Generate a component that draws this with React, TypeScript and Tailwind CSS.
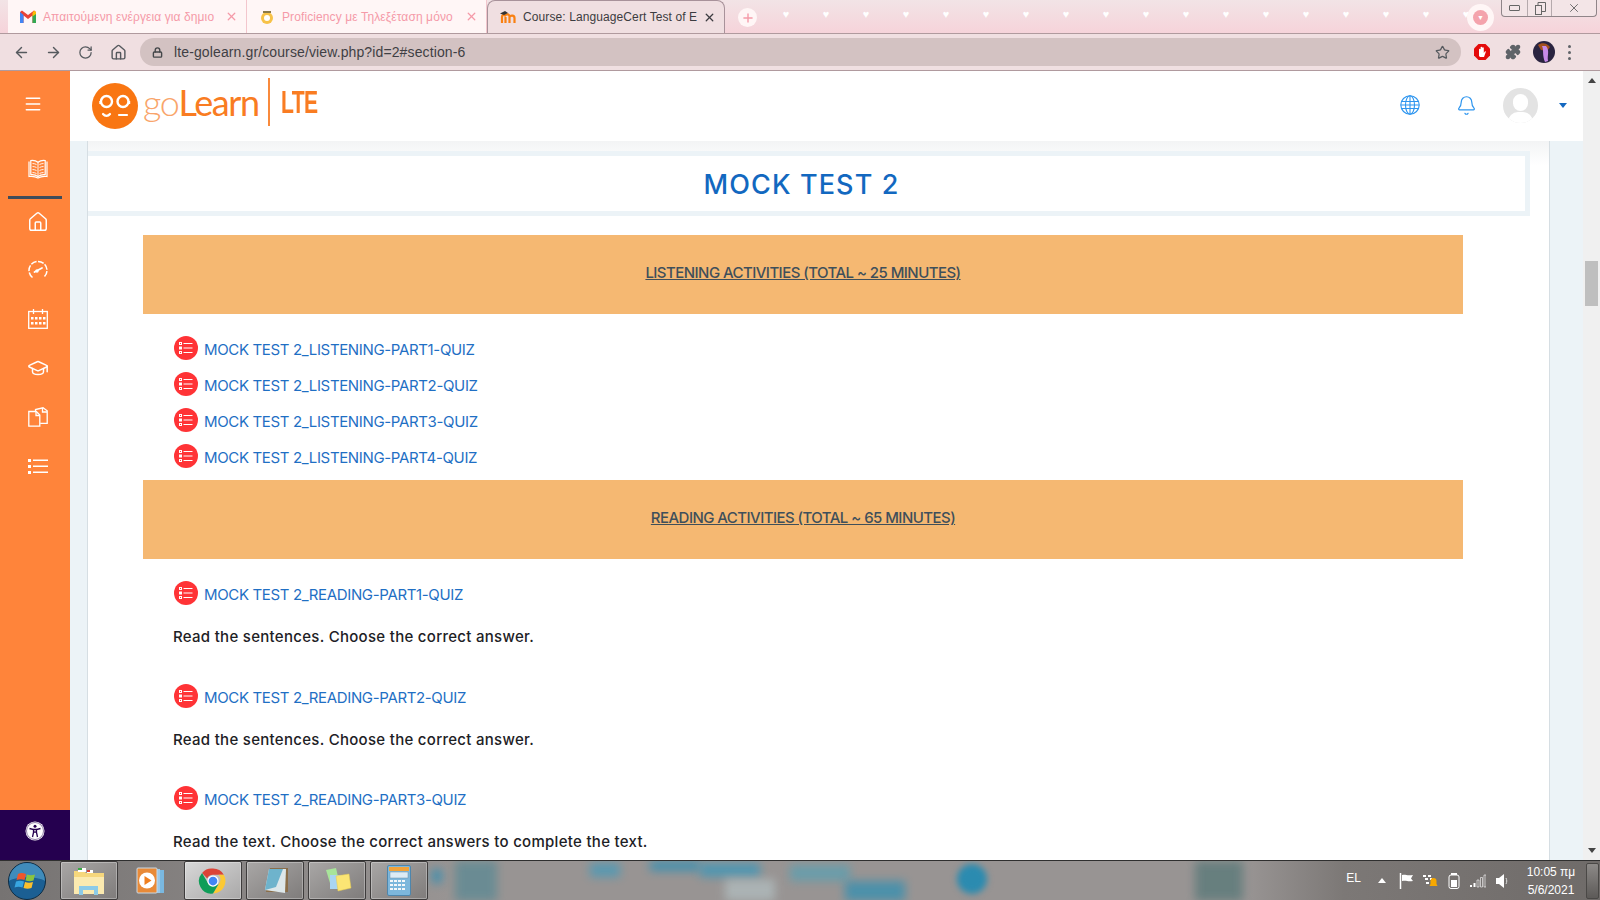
import { ArrowLeft, ArrowRight, RotateCw, Home, Lock, Star, Puzzle, Bell, Menu, GraduationCap, X, Plus } from 'lucide-react';

const poppins = "font-['Inter','Noto_Sans',sans-serif]";

function QuizIcon() {
  return (
    <svg width="24" height="24" viewBox="0 0 24 24" className="shrink-0">
      <circle cx="12" cy="12" r="12" fill="#ff3336" />
      <g fill="none" stroke="#fff" strokeWidth="1">
        <rect x="5.500" y="6.500" width="2" height="2" />
        <rect x="5.500" y="11" width="2" height="2" />
        <rect x="5.500" y="15.500" width="2" height="2" />
      </g>
      <path d="M9.500 7.500h9M9.500 12h9M9.500 16.500h9" stroke="#fff" strokeWidth="1" />
    </svg>
  );
}

function QuizLink({ label }: { label: string }) {
  return (
    <div className="flex items-start gap-[6px]">
      <QuizIcon />
      <a href="#" className="pt-[4px] text-[15px] leading-[20px] text-[#1f6fc4] tracking-[-0.35px] whitespace-nowrap">{label}</a>
    </div>
  );
}

function Banner({ label, h }: { label: string; h: string }) {
  return (
    <div className={`${h} bg-[#f5b872] flex items-center justify-center pb-[2px]`}>
      <span className="text-[15px] font-medium text-[#3f4f5a] underline tracking-[-0.55px]">{label}</span>
    </div>
  );
}

function Desc({ text }: { text: string }) {
  return <p className="ml-[-1px] text-[15px] leading-[20px] font-medium text-[#1d2125] tracking-[0.29px] whitespace-nowrap">{text}</p>;
}

function Tab({ title, active, width, icon }: { title: string; active?: boolean; width: string; icon: React.ReactNode }) {
  return (
    <div className={`${width} h-[33px] flex items-center pl-[12px] pr-[8px] gap-[7px] ${active ? 'bg-[#f0dfe1] border border-b-0 border-[#a8929a] rounded-t-[8px]' : 'bg-[#fff6f6] border-r border-[#f3c6cd]'}`}>
      <span className="w-[16px] h-[16px] flex items-center justify-center shrink-0">{icon}</span>
      <span className={`flex-1 min-w-0 whitespace-nowrap text-[12px] tracking-[0.1px] font-['Liberation_Sans',sans-serif] ${active ? 'text-[#3c3c40]' : 'text-[#f59aa8]'}`}>{title}</span>
      <X size={13} strokeWidth={2.4} className={active ? 'text-[#3c3c40]' : 'text-[#f59aa8]'} />
    </div>
  );
}

function TabStrip() {
  const hearts = Array.from({ length: 18 });
  return (
    <div className="relative h-[34px] flex items-start pl-[8px] bg-gradient-to-b from-[#f2e4e6] to-[#f6d3da] border-b border-[#b09a9e]">
      <Tab
        width="w-[239px]"
        title="Απαιτούμενη ενέργεια για δημιο"
        icon={
          <svg width="16" height="13" viewBox="0 0 16 13">
            <path d="M0 2v11h3.500V5.500L8 9l4.500-3.500V13H16V2l-2-1.600L8 5 2 .4z" fill="#ea4335" />
            <path d="M0 2v11h3.500V5z" fill="#4285f4" />
            <path d="M16 2v11h-3.500V5z" fill="#34a853" />
            <path d="M14 .4 16 2v2l-3.500 2.500V3z" fill="#fbbc04" />
          </svg>
        }
      />
      <Tab
        width="w-[240px]"
        title="Proficiency με Τηλεξέταση μόνο"
        icon={
          <svg width="14" height="17" viewBox="0 0 14 17">
            <circle cx="7" cy="10" r="6" fill="#f7c248" />
            <circle cx="7" cy="10" r="3" fill="#fff" />
            <path d="M3 3h8v2H3z" fill="#8a7a4a" />
          </svg>
        }
      />
      <Tab
        active
        width="w-[238px]"
        title="Course: LanguageCert Test of E"
        icon={
          <svg width="16" height="14" viewBox="0 0 16 14">
            <path d="M2 13V7c0-2 2-2.500 3-1.500C6 4 9 4 9.500 6V13M5.500 13V7M9.500 7c1-2 5-2 5 1v5" fill="none" stroke="#f98012" strokeWidth="2.200" />
            <path d="M0 3.500 5 1l3 2-4 2z" fill="#333" />
          </svg>
        }
      />
      <span className="ml-[13px] mt-[8px] w-[19px] h-[19px] rounded-full bg-[#fff6f6] flex items-center justify-center">
        <Plus size={14} strokeWidth={2.4} className="text-[#f59aa8]" />
      </span>
      <div className="ml-[24px] mt-[5px] flex gap-[30px] text-[11px] leading-[18px] text-white">
        {hearts.map((_, i) => <span key={i} className="w-[10px] text-center">♥</span>)}
      </div>
      <span className="absolute left-[1467px] top-[4px] w-[27px] h-[27px] rounded-full bg-[#fff6f6] flex items-center justify-center">
        <span className="w-[15px] h-[15px] rounded-full bg-[#f4a3ac] flex items-center justify-center text-white text-[7px] leading-none">▼</span>
      </span>
      {/* window buttons */}
      <div className="absolute right-[3px] top-0 flex h-[17px] bg-[#f3e5e7] border border-t-0 border-[#8f8589] rounded-b-[4px] text-[#555]">
        <div className="w-[26px] flex items-center justify-center border-r border-[#b5aaad]"><span className="w-[11px] h-[6px] border border-[#666] rounded-[1px]" /></div>
        <div className="w-[24px] flex items-center justify-center border-r border-[#b5aaad]">
          <svg width="12" height="13" viewBox="0 0 12 13" fill="none" stroke="#666"><rect x="1.500" y="3.500" width="6" height="9" /><path d="M4 3V.5h7.500v9H8" /></svg>
        </div>
        <div className="w-[44px] flex items-center justify-center"><X size={14} strokeWidth={1.6} className="text-[#666]" /></div>
      </div>
    </div>
  );
}

function Toolbar() {
  return (
    <div className="h-[37px] flex items-center pl-[13px] bg-[#f0dfe1] border-b border-[#b09a9e] text-[#55595e]">
      <ArrowLeft size={17} strokeWidth={2} />
      <ArrowRight size={17} strokeWidth={2} className="ml-[15px]" />
      <RotateCw size={15} strokeWidth={2} className="ml-[16px]" />
      <Home size={17} strokeWidth={2} className="ml-[17px]" />
      <div className="ml-[13px] w-[1321px] h-[28px] rounded-full bg-[#d3c2c2] flex items-center pl-[12px] pr-[11px]">
        <Lock size={11} strokeWidth={3} className="text-[#44474a]" />
        <span className="ml-[11px] text-[14px] tracking-[0.12px] text-[#3f3f44] font-['Liberation_Sans',sans-serif]">lte-golearn.gr/course/view.php?id=2#section-6</span>
        <Star size={15} strokeWidth={2} className="ml-auto text-[#55595e]" />
      </div>
      {/* Opera stop badge */}
      <svg width="18" height="18" viewBox="0 0 18 18" className="ml-[12px]">
        <path d="M5.500 1h7L17 5.500v7L12.500 17h-7L1 12.500v-7z" fill="#e40b0b" />
        <path d="M6 13V6.500a.8.8 0 0 1 1.600 0V9V4.500a.8.8 0 0 1 1.600 0V9V5a.8.8 0 0 1 1.600 0v5l1-1.500c.6-.7 1.300 0 1 .5L11 14H7z" fill="#fff" />
      </svg>
      <Puzzle size={16} strokeWidth={2} fill="#5f6368" className="ml-[14px] text-[#5f6368]" />
      <svg width="22" height="22" viewBox="0 0 22 22" className="ml-[12px]">
        <circle cx="11" cy="11" r="11" fill="#2a2440" />
        <path d="M5 4c4-3 9-2 12 2l-3 4-6-1z" fill="#a3501e" />
        <path d="M9 5c2 4 0 9 3 16l3-1c-1-6 2-10-2-15z" fill="#c68ae8" />
      </svg>
      <span className="ml-[13px] flex flex-col gap-[3px]">
        <span className="w-[3px] h-[3px] rounded-full bg-[#5f6368]" />
        <span className="w-[3px] h-[3px] rounded-full bg-[#5f6368]" />
        <span className="w-[3px] h-[3px] rounded-full bg-[#5f6368]" />
      </span>
    </div>
  );
}

function BookIcon() {
  return (
    <svg width="20" height="20" viewBox="0 0 20 20" fill="none" stroke="#fff" strokeWidth="1.200">
      <path d="M1 2.500v15c3-.4 6.500 0 9 1.500 2.500-1.500 6-1.900 9-1.500v-15" />
      <path d="M2.800 1.500c3-.4 5.500.4 7.200 1.700 1.700-1.300 4.200-2.100 7.200-1.700v14.200c-3-.3-5.500.5-7.200 1.700-1.700-1.200-4.200-2-7.200-1.700z" />
      <path d="M10 3.200v14M4.500 4.500c1.500 0 2.800.4 4 1M4.500 7.500c1.500 0 2.800.4 4 1M4.500 10.500c1.500 0 2.800.4 4 1M4.500 13.500c1.500 0 2.800.4 4 1M15.500 4.500c-1.500 0-2.800.4-4 1M15.500 7.500c-1.500 0-2.800.4-4 1M15.500 10.500c-1.500 0-2.800.4-4 1M15.500 13.500c-1.500 0-2.800.4-4 1" strokeWidth=".9" />
    </svg>
  );
}

function GaugeIcon() {
  return (
    <svg width="20" height="20" viewBox="0 0 20 20" fill="none" stroke="#fff" strokeWidth="1.500">
      <path d="M4.500 17.500a9 9 0 1 1 11 0" strokeDasharray="6 1.400" />
      <path d="M6.500 12 14 8" strokeWidth="1.800" strokeLinecap="round" />
      <circle cx="9" cy="11" r="1" fill="#fff" />
    </svg>
  );
}

function CalendarIcon() {
  return (
    <svg width="20" height="20" viewBox="0 0 20 20" fill="none" stroke="#fff" strokeWidth="1.300">
      <rect x=".7" y="2.500" width="18.600" height="16.800" />
      <path d="M5.500 0v5M14.500 0v5" />
      <g fill="#fff" stroke="none">
        <rect x="3" y="8" width="2.500" height="2.500" /><rect x="7" y="8" width="2.500" height="2.500" /><rect x="11" y="8" width="2.500" height="2.500" /><rect x="15" y="8" width="2.500" height="2.500" />
        <rect x="3" y="13" width="2.500" height="2.500" /><rect x="7" y="13" width="2.500" height="2.500" /><rect x="11" y="13" width="2.500" height="2.500" /><rect x="15" y="13" width="2.500" height="2.500" />
      </g>
    </svg>
  );
}

function FilesIcon() {
  return (
    <svg width="20" height="20" viewBox="0 0 20 20" fill="none" stroke="#fff" strokeWidth="1.300">
      <path d="M.8 4.500h7.500l3.500 3.500v11.200H.8z" />
      <path d="M8 4.500v4h3.800" />
      <path d="M7.500 4V2.500L15 .8l4.200 3v12.500h-7" />
      <path d="M14.500 1v4h4.500" />
    </svg>
  );
}

function ListIcon() {
  return (
    <svg width="20" height="20" viewBox="0 0 20 20" fill="#fff">
      <rect x="0" y="3" width="3" height="3" /><rect x="0" y="9" width="3" height="3" /><rect x="0" y="15" width="3" height="3" />
      <rect x="5" y="3.500" width="15" height="1.500" /><rect x="5" y="9.500" width="15" height="1.500" /><rect x="5" y="15.500" width="15" height="1.500" />
    </svg>
  );
}

function GlobeIcon() {
  return (
    <svg width="20" height="20" viewBox="0 0 20 20" fill="none" stroke="#2f96ef" strokeWidth="1.100">
      <circle cx="10" cy="10" r="9.200" />
      <ellipse cx="10" cy="10" rx="4.500" ry="9.200" />
      <path d="M10 .8v18.400M1.500 6.500h17M.8 10h18.400M1.500 13.500h17" />
    </svg>
  );
}

function Sidebar() {
  const items = [<GaugeIcon key="g" />, <CalendarIcon key="c" />, <GraduationCap key="h" size={22} strokeWidth={1.6} className="-ml-[1px]" />, <FilesIcon key="f" />, <ListIcon key="l" />];
  return (
    <aside className="w-[70px] shrink-0 bg-[#ff843a] flex flex-col text-white">
      <div className="h-[70px] flex items-center pl-[23px] pb-[4px]"><Menu size={20} strokeWidth={1.8} /></div>
      <div className="h-[55px] flex items-center pl-[28px]"><BookIcon /></div>
      <div className="mx-[8px] h-[3px] bg-[#3f4c5a]" />
      <div className="h-[46px] flex items-center pl-[27px]"><Home size={22} strokeWidth={1.6} /></div>
      {items.map((icon, i) => (
        <div key={i} className="h-[49px] flex items-center pl-[28px]">{icon}</div>
      ))}
      <div className="mt-auto h-[50px] bg-[#25004f] flex items-center justify-center pb-[8px]">
        <svg width="20" height="20" viewBox="0 0 20 20">
          <circle cx="10" cy="10" r="9.500" fill="#fff" />
          <circle cx="10" cy="10" r="8.500" fill="none" stroke="#25004f" strokeWidth=".5" />
          <circle cx="10" cy="5.200" r="1.500" fill="#25004f" />
          <path d="M4.500 7.500 8.500 8.500v3L7.500 16M15.500 7.500l-4 1v3l1 4.500M8.500 8.500h3M8.500 11.500 10 11l1.500.5" fill="none" stroke="#25004f" strokeWidth="1.300" />
        </svg>
      </div>
    </aside>
  );
}

function Header() {
  return (
    <header className="h-[70px] bg-white flex items-center shrink-0">
      {/* logo */}
      <svg width="46" height="46" viewBox="0 0 46 46" className="ml-[22px] shrink-0 -mt-[1px]">
        <circle cx="23" cy="23" r="23" fill="#f97612" />
        <g fill="none" stroke="#fff" strokeWidth="2.400">
          <circle cx="14.500" cy="18.500" r="5.500" />
          <circle cx="31" cy="18.500" r="5.500" />
          <path d="M8.500 18v3M37 18v3" />
        </g>
        <path d="M11 31c2 2.500 5 2.500 7 0" fill="none" stroke="#fff" strokeWidth="2.200" strokeLinecap="round" />
        <path d="M27 32h8" stroke="#fff" strokeWidth="2.200" strokeLinecap="round" />
      </svg>
      <div className="ml-[5px] flex items-baseline text-[36px] leading-none tracking-[-1.4px] font-['Lato',sans-serif] text-[#f97c22] -mt-[9px]">
        <span className="font-light text-[#f9a56b]">go</span>
        <span className="font-normal">Learn</span>
      </div>
      <div className="ml-[9px] w-[2px] h-[48px] bg-[#f98a3c] mb-[9px]" />
      <span className="ml-[11px] text-[32px] leading-none font-bold text-[#f97c22] font-['Liberation_Sans',sans-serif] tracking-[-1px] scale-x-[0.66] origin-left -mt-[8px]">LTE</span>
      <div className="ml-auto flex items-center text-[#2f96ef] pb-[2px]">
        <GlobeIcon />
        <Bell size={21} strokeWidth={1.4} className="ml-[36px]" />
        <span className="relative ml-[26px] w-[35px] h-[35px] rounded-full bg-[#e3e3e3] overflow-hidden">
          <span className="absolute left-[10px] top-[6px] w-[15px] h-[17px] rounded-full bg-white" />
          <span className="absolute left-[5px] top-[24px] w-[25px] h-[20px] rounded-full bg-white" />
        </span>
        <span className="ml-[21px] mr-[16px] w-0 h-0 border-x-[4px] border-x-transparent border-t-[5px] border-t-[#1468c0]" />
      </div>
    </header>
  );
}

function Scrollbar() {
  return (
    <div className="w-[17px] shrink-0 bg-[#f0f0f0] flex flex-col items-center">
      <span className="mt-[7px] w-0 h-0 border-x-[4px] border-x-transparent border-b-[5px] border-b-[#444]" />
      <span className="mt-[178px] w-[13px] h-[45px] bg-[#bfbfbf]" />
      <span className="mt-auto mb-[7px] w-0 h-0 border-x-[4px] border-x-transparent border-t-[5px] border-t-[#444]" />
    </div>
  );
}

function Course() {
  return (
    <div className={`flex-1 min-h-0 bg-[#ecf3f7] pl-[17px] pr-[33px] overflow-hidden ${poppins}`}>
      <div className="h-full bg-white border-x border-[#d6dee3] bg-gradient-to-b from-[#f3f4f5] to-white to-[24px] pt-[10px] pr-[19px]">
        <div className="h-[65px] bg-white border-[5px] border-l-0 border-[#ecf3f7] flex items-center justify-center pr-[10px] pt-[3px]">
          <h1 className="text-[27px] font-medium text-[#1268c0] tracking-[1.1px]">MOCK TEST 2</h1>
        </div>
        <div className="mt-[19px] ml-[55px] mr-[67px]">
          <Banner h="h-[79px]" label="LISTENING ACTIVITIES (TOTAL ~ 25 MINUTES)" />
          <div className="ml-[31px] mt-[22px] flex flex-col gap-[12px]">
            <QuizLink label="MOCK TEST 2_LISTENING-PART1-QUIZ" />
            <QuizLink label="MOCK TEST 2_LISTENING-PART2-QUIZ" />
            <QuizLink label="MOCK TEST 2_LISTENING-PART3-QUIZ" />
            <QuizLink label="MOCK TEST 2_LISTENING-PART4-QUIZ" />
          </div>
          <div className="mt-[12px]">
            <Banner h="h-[79px]" label="READING ACTIVITIES (TOTAL ~ 65 MINUTES)" />
          </div>
          <div className="ml-[31px] mt-[22px]">
            <QuizLink label="MOCK TEST 2_READING-PART1-QUIZ" />
            <div className="mt-[22px]"><Desc text="Read the sentences. Choose the correct answer." /></div>
            <div className="mt-[37px]"><QuizLink label="MOCK TEST 2_READING-PART2-QUIZ" /></div>
            <div className="mt-[22px]"><Desc text="Read the sentences. Choose the correct answer." /></div>
            <div className="mt-[36px]"><QuizLink label="MOCK TEST 2_READING-PART3-QUIZ" /></div>
            <div className="mt-[22px]"><Desc text="Read the text. Choose the correct answers to complete the text." /></div>
          </div>
        </div>
      </div>
    </div>
  );
}

function TaskButton({ children, light, bare }: { children: React.ReactNode; light?: boolean; bare?: boolean }) {
  return (
    <div className={`w-[58px] h-[39px] flex items-center justify-center rounded-[2px] ${bare ? '' : 'border border-[#3e3c3c] shadow-[inset_0_0_0_1px_rgba(255,255,255,0.3)]'} ${light ? 'bg-gradient-to-br from-[#d8d8d8] to-[#a9a8a8]' : bare ? '' : 'bg-gradient-to-br from-[#a9a7a6] to-[#7f7c7b]'}`}>
      {children}
    </div>
  );
}

function Taskbar() {
  const blobs = [
    'left-[432px] top-[8px] w-[10px] h-[14px] bg-[#2f8fb5]',
    'left-[455px] top-0 w-[42px] h-[40px] bg-[#5f8a94]',
    'left-[590px] top-[2px] w-[30px] h-[14px] bg-[#4a9ab8]',
    'left-[650px] top-0 w-[50px] h-[10px] bg-[#2f8fb5]',
    'left-[700px] top-[2px] w-[60px] h-[14px] bg-[#3f97b8]',
    'left-[725px] top-[18px] w-[50px] h-[22px] bg-[#b0bbbd]',
    'left-[790px] top-[4px] w-[60px] h-[16px] bg-[#5f9fb0]',
    'left-[845px] top-[20px] w-[60px] h-[20px] bg-[#3990b0]',
    'left-[1195px] top-0 w-[48px] h-[40px] bg-[#5c7a7a]',
  ];
  return (
    <div className="relative h-[40px] shrink-0 overflow-hidden bg-[linear-gradient(90deg,#767372_0%,#989493_28%,#989493_78%,#7c7876_84%,#6f6b69_100%)] border-t border-[#2f2f2f] flex items-center">
      {/* blurred wallpaper showing through */}
      {blobs.map((b) => <span key={b} className={`absolute ${b} blur-[5px] opacity-80`} />)}
      <span className="absolute left-[957px] top-[3px] w-[30px] h-[30px] rounded-full bg-[#2b8bb0] blur-[3px]" />

      <div className="relative flex items-center w-[60px] pl-[8px]">
        <svg width="38" height="38" viewBox="0 0 38 38">
          <circle cx="19" cy="19" r="18.500" fill="#1b5f93" stroke="#0d2c44" />
          <path d="M1 19a18 18 0 0 1 36 0c-8-5-28-5-36 0z" fill="#5eb1dd" opacity=".55" />
          <path d="M10 12c3-1.500 5-1 8 0l-1.500 6c-3-1-5-1-8 0z" fill="#f0562a" />
          <path d="M19 12.500c3 1 5 1 8 0L25.500 18.500c-3 1-5 1-8 0z" fill="#8ac43f" />
          <path d="M8 19.500c3-1 5-1 8 0L14.500 25.500c-3-1-5-1-8 0z" fill="#38a5e0" />
          <path d="M17 20c3 1 5 1 8 0L23.500 26c-3 1-5 1-8 0z" fill="#fbc02d" />
        </svg>
      </div>
      <div className="relative flex items-center">
        <TaskButton>
          <svg width="32" height="30" viewBox="0 0 32 30">
            <path d="M1 5h10l2 2h18v20H1z" fill="#f6d77c" />
            <path d="M1 11h30v17H1z" fill="#fbeab0" />
            <path d="M5 2h8v4H5z" fill="#fff" /><path d="M5 2h4v2H5z" fill="#39a845" />
            <path d="M14 4h6v3h-6z" fill="#fff" /><path d="M14 4h3v2h-3z" fill="#d6402f" />
            <path d="M6 20h19v9h-4v-5h-11v5H6z" fill="#8ccbe8" />
          </svg>
        </TaskButton>
        <div className="ml-[3px]">
          <TaskButton bare>
            <svg width="30" height="28" viewBox="0 0 30 28">
              <rect x="9" y="3" width="20" height="23" fill="#7ab8e0" />
              <rect x="5" y="2" width="20" height="24" fill="#9bc9ea" />
              <rect x="2" y="1" width="20" height="25" rx="1" fill="#e88a38" stroke="#c9d9e6" />
              <circle cx="12" cy="13.500" r="8" fill="#fff" />
              <path d="M9.500 9v9l7-4.500z" fill="#f08020" />
            </svg>
          </TaskButton>
        </div>
        <div className="ml-[5px]">
          <TaskButton light>
            <svg width="30" height="30" viewBox="0 0 48 48">
              <path d="M24 4a20 20 0 0 1 17.300 10H24a10 10 0 0 0-9.200 6L6.500 11A20 20 0 0 1 24 4z" fill="#db4437" />
              <path d="M41.300 14A20 20 0 0 1 24 44l8.700-15a10 10 0 0 0 0-15z" fill="#fcc934" />
              <path d="M24 44A20 20 0 0 1 6.500 11l8.600 15a10 10 0 0 0 9 6.500l8.600-3.500z" fill="#0f9d58" />
              <circle cx="24" cy="24" r="9" fill="#fff" />
              <circle cx="24" cy="24" r="7" fill="#4285f4" />
            </svg>
          </TaskButton>
        </div>
        <div className="ml-[4px]">
          <TaskButton>
            <svg width="30" height="30" viewBox="0 0 30 30">
              <path d="M10 2h18v24H6z" fill="#8a6e4a" />
              <path d="M9 3h17l-1 24-20-3z" fill="#dde7ea" />
              <path d="M9 3h14L16 21l-11 3z" fill="#6eb3cc" />
            </svg>
          </TaskButton>
        </div>
        <div className="ml-[4px]">
          <TaskButton>
            <svg width="32" height="30" viewBox="0 0 32 30">
              <path d="M5 4 15 2l3 13-9 2z" fill="#a8e49a" />
              <path d="M9 9h12v14H9z" fill="#a9d5f2" />
              <path d="M15 10l13-2 2 14-13 3z" fill="#fbe574" stroke="#e5ca50" strokeWidth=".5" />
            </svg>
          </TaskButton>
        </div>
        <div className="ml-[4px]">
          <TaskButton>
            <svg width="24" height="31" viewBox="0 0 24 31">
              <rect x=".5" y=".5" width="23" height="30" rx="1.500" fill="#7db7dc" stroke="#4d86ad" />
              <rect x="2" y="2" width="20" height="4" fill="#f0a23a" />
              <rect x="3" y="7" width="18" height="6" fill="#dcebf5" stroke="#6d8ea8" strokeWidth=".5" />
              <g fill="#f4f7f9">
                <rect x="3" y="15" width="3" height="2" /><rect x="7" y="15" width="3" height="2" /><rect x="11" y="15" width="3" height="2" /><rect x="15" y="15" width="3" height="2" />
                <rect x="3" y="19" width="3" height="2" /><rect x="7" y="19" width="3" height="2" /><rect x="11" y="19" width="3" height="2" /><rect x="15" y="19" width="3" height="2" />
                <rect x="3" y="23" width="3" height="2" /><rect x="7" y="23" width="3" height="2" /><rect x="11" y="23" width="3" height="2" /><rect x="15" y="23" width="3" height="2" />
              </g>
            </svg>
          </TaskButton>
        </div>
      </div>
      {/* tray */}
      <div className="relative ml-auto flex items-center h-full text-white font-['Liberation_Sans',sans-serif]">
        <span className="text-[12px] -mt-[5px]">EL</span>
        <span className="ml-[17px] w-0 h-0 border-x-[4px] border-x-transparent border-b-[5px] border-b-white" />
        <svg width="16" height="16" viewBox="0 0 16 16" className="ml-[13px]"><path d="M1.500 0v16" stroke="#fff" strokeWidth="1.500" /><path d="M3 2c4-1 4 1 11 0l-2 3.500L14 8C8 9 8 7 3 8z" fill="#fff" /></svg>
        <svg width="16" height="15" viewBox="0 0 16 15" className="ml-[7px]"><path d="M1 2h3v2H1zM6 2h3v2H6zM3 5h3v2H3zM8 5h2v2H8zM4 9h3v2H4z" fill="#fff" /><path d="M11.500 5a3 3 0 0 1 3 3v3l1 2H7.500l1-2V8a3 3 0 0 1 3-3z" fill="#f7a800" /></svg>
        <svg width="12" height="16" viewBox="0 0 12 16" className="ml-[10px]"><rect x="1" y="2" width="10" height="13.500" rx="2" fill="none" stroke="#fff" /><rect x="3" y="0" width="6" height="2" fill="#fff" /><rect x="3" y="7" width="6" height="7" fill="#fff" /></svg>
        <svg width="16" height="14" viewBox="0 0 16 14" className="ml-[10px]"><path d="M0 11h2v2H0z" fill="#fff" /><path d="M3.500 9h2v4h-2z" fill="#fff" /><path d="M7 6h2v7H7zM10.500 3.500h2V13h-2zM14 1h2v12h-2z" fill="none" stroke="#fff" strokeWidth=".6" /></svg>
        <svg width="14" height="16" viewBox="0 0 14 16" className="ml-[10px]"><path d="M0 5h3l5-4v14l-5-4H0z" fill="#fff" /><path d="M10 5c1 2 1 4 0 6" fill="none" stroke="#dfdfdf" /></svg>
        <div className="ml-[6px] w-[70px] flex flex-col items-center text-[12px] leading-[18px]">
          <span>10:05 πμ</span>
          <span>5/6/2021</span>
        </div>
        <div className="mr-[1px] w-[13px] h-[36px] border border-[#4a4846] rounded-[2px] bg-gradient-to-b from-[#8d8a88] to-[#5d5a58]" />
      </div>
    </div>
  );
}

export default function App() {
  return (
    <div className="w-[1600px] h-[900px] flex flex-col overflow-hidden bg-white">
      <TabStrip />
      <Toolbar />
      <div className="flex-1 min-h-0 flex">
        <Sidebar />
        <div className="flex-1 min-w-0 flex flex-col">
          <Header />
          <Course />
        </div>
        <Scrollbar />
      </div>
      <Taskbar />
    </div>
  );
}
